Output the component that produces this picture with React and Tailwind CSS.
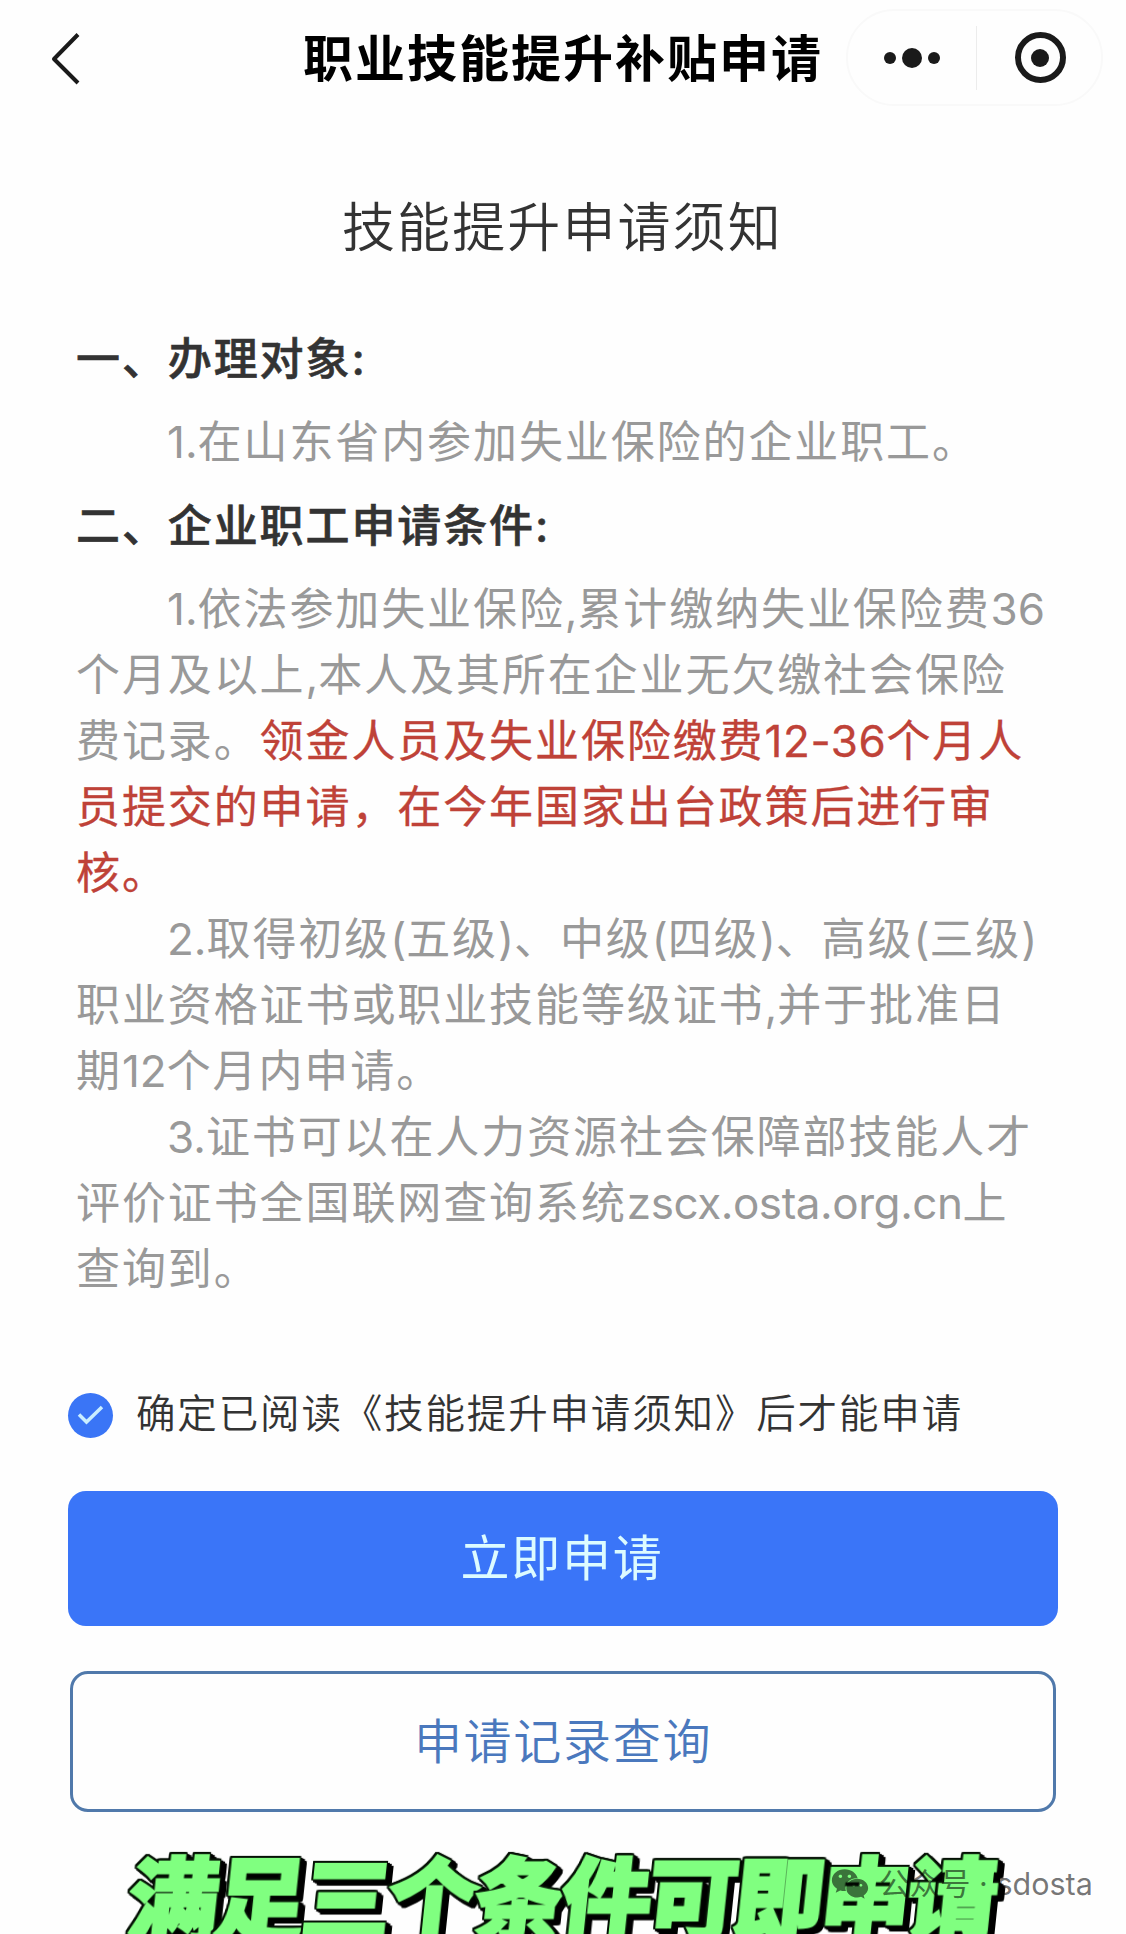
import { FaWeixin } from "react-icons/fa";

const notice = [
  [{ text: "1.依法参加失业保险,累计缴纳失业保险费36", indent: true }],
  [{ text: "个月及以上,本人及其所在企业无欠缴社会保险" }],
  [{ text: "费记录。" }, { text: "领金人员及失业保险缴费12-36个月人", red: true }],
  [{ text: "员提交的申请，在今年国家出台政策后进行审", red: true }],
  [{ text: "核。", red: true }],
  [{ text: "2.取得初级(五级)、中级(四级)、高级(三级)", indent: true }],
  [{ text: "职业资格证书或职业技能等级证书,并于批准日" }],
  [{ text: "期12个月内申请。" }],
  [{ text: "3.证书可以在人力资源社会保障部技能人才", indent: true }],
  [{ text: "评价证书全国联网查询系统zscx.osta.org.cn上" }],
  [{ text: "查询到。" }],
];

const captionChars = [..."满足三个条件可即申请"];

function latinTracking(run) {
  if (/[a-z]/.test(run)) return "tracking-[-0.45px]";
  if (run.includes("-")) return "tracking-[0.6px]";
  return "tracking-normal";
}

// Chinese runs keep the letter spacing, latin letters and digits are set tight
function Mixed({ text }) {
  return text.split(/([\x21-\x7e]+)/).map((run, i) =>
    i % 2 === 1 ? (
      <span key={i} className={latinTracking(run)}>
        {run}
      </span>
    ) : (
      run
    )
  );
}

function NavBar() {
  return (
    <header className="flex h-[115px] items-center pr-[23px] pl-[50px]">
      <svg width="32" height="54" viewBox="0 0 32 54" fill="none">
        <path d="M28 3.500 4 28 28 52" stroke="#1a1a1a" strokeWidth="4" strokeLinejoin="round" />
      </svg>
      <h1 className="ml-[221px] pt-[2px] text-[50px] leading-[60px] font-bold tracking-[2px] whitespace-nowrap text-black">
        职业技能提升补贴申请
      </h1>
      <div className="ml-auto flex h-[97px] w-[257px] shrink-0 items-center rounded-full border-2 border-[#f9f9f9]">
        <div className="flex w-[128px] items-center justify-center gap-[6px]">
          <span className="size-[12px] rounded-full bg-[#1a1a1a]" />
          <span className="size-[20px] rounded-full bg-[#1a1a1a]" />
          <span className="size-[12px] rounded-full bg-[#1a1a1a]" />
        </div>
        <div className="h-[64px] w-px bg-[#ececec]" />
        <div className="flex flex-1 items-center justify-center pl-[2px]">
          <div className="flex size-[51px] items-center justify-center rounded-full border-[6px] border-[#1a1a1a]">
            <span className="size-[18px] rounded-full bg-[#1a1a1a]" />
          </div>
        </div>
      </div>
    </header>
  );
}

function NoticeLine({ parts }) {
  return (
    <p className={parts[0].indent ? "pl-[91px]" : ""}>
      {parts.map((part) => (
        <span
          key={part.text}
          className={part.red ? "text-[#bf4238] [-webkit-text-stroke:0.3px_#bf4238]" : ""}
        >
          <Mixed text={part.text} />
        </span>
      ))}
    </p>
  );
}

function Notice() {
  return (
    <section className="mt-[63px] pl-[76px] text-[44px] leading-[66px] font-normal tracking-[1.9px] whitespace-nowrap text-[#999999]">
      <h3 className="font-medium text-[#333333] [-webkit-text-stroke:0.6px_#333333]">一、办理对象:</h3>
      <p className="mt-[17px] pl-[91px]">
        <Mixed text="1.在山东省内参加失业保险的企业职工。" />
      </p>
      <h3 className="mt-[18px] font-medium text-[#333333] [-webkit-text-stroke:0.6px_#333333]">
        二、企业职工申请条件:
      </h3>
      <div className="mt-[17px]">
        {notice.map((parts) => (
          <NoticeLine key={parts[0].text} parts={parts} />
        ))}
      </div>
    </section>
  );
}

function Caption() {
  return (
    <div className="absolute inset-x-0 bottom-0 h-[100px] overflow-hidden">
      <div className="ml-[136px] flex origin-top-left -skew-x-6 pt-[12px] text-[90px] leading-[110px] font-black text-[#80ff80] [-webkit-text-stroke:3px_#80ff80]">
        {captionChars.map((char) => (
          <span
            key={char}
            className="w-[86.5px] [filter:drop-shadow(1.5px_0_0_#041004)_drop-shadow(-1.5px_0_0_#041004)_drop-shadow(0_1.5px_0_#041004)_drop-shadow(0_-1.5px_0_#041004)_drop-shadow(2px_2px_0_#000)_drop-shadow(4px_3px_0_#000)]"
          >
            {char}
          </span>
        ))}
      </div>
      <div className="absolute top-[30px] left-[831px] flex items-center text-[30.500px] leading-[40px] text-black/55">
        <FaWeixin className="size-[38px]" />
        <span className="ml-[10px] whitespace-nowrap">公众号 · sdosta</span>
      </div>
    </div>
  );
}

export default function App() {
  return (
    <div className="relative h-[1934px] w-[1126px] overflow-hidden bg-[#fefefe] font-[Inter,'Noto_Sans_CJK_SC',sans-serif]">
      <NavBar />
      <h2 className="mt-[78px] pl-[342px] text-[53px] leading-[70px] font-[350] tracking-[2.1px] text-[#333333]">
        技能提升申请须知
      </h2>
      <Notice />
      <label className="mt-[83px] flex h-[60px] items-center pl-[68px]">
        <span className="flex size-[45px] items-center justify-center rounded-full bg-[#3a75f6]">
          <svg width="27" height="20" viewBox="0 0 27 20" fill="none">
            <path d="M2 9.500 9.500 17 25 2" stroke="#c9eeff" strokeWidth="3.500" />
          </svg>
        </span>
        <span className="ml-[23px] text-[39.500px] font-[350] tracking-[1.85px] whitespace-nowrap text-[#333333]">
          确定已阅读《技能提升申请须知》后才能申请
        </span>
      </label>
      <div className="flex flex-col px-[68px]">
        <button className="mt-[46px] h-[135px] rounded-[18px] bg-[#3a75f8] pr-[2px] text-[49px] tracking-[1.7px] text-[#dcfbff]">
          立即申请
        </button>
        <button className="mx-[2px] mt-[45px] h-[141px] rounded-[18px] border-[3px] border-[#5079ab] text-[48px] font-[350] tracking-[1.7px] text-[#4a78bd]">
          申请记录查询
        </button>
      </div>
      <Caption />
    </div>
  );
}
